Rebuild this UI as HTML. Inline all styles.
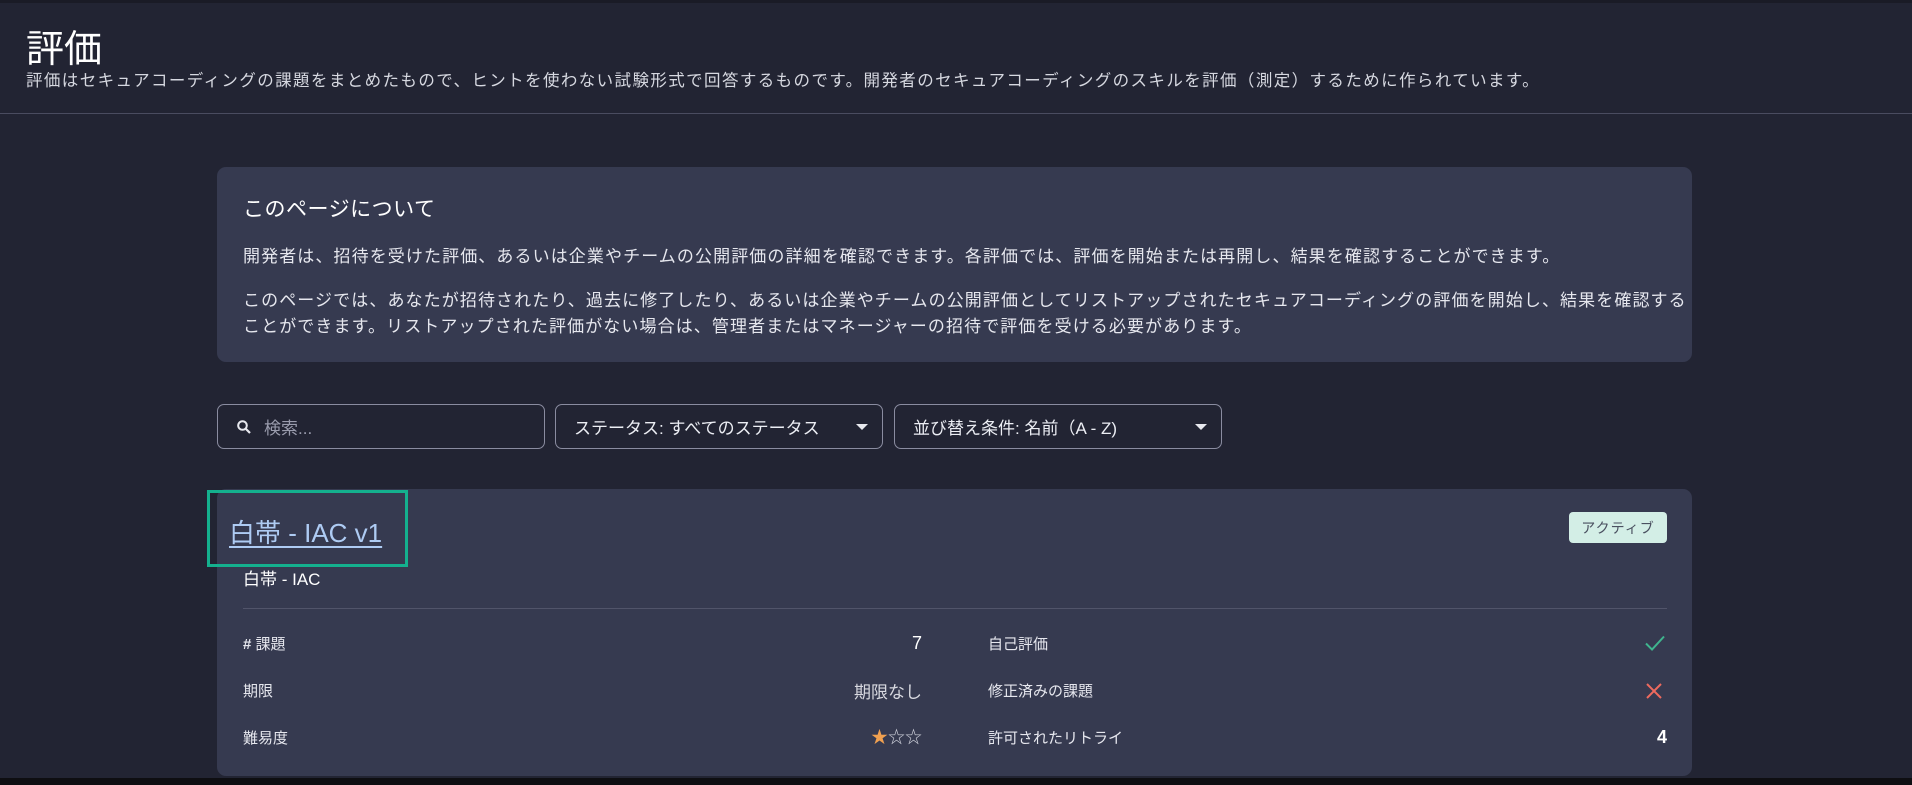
<!DOCTYPE html>
<html><head><meta charset="utf-8"><style>
*{margin:0;padding:0;box-sizing:border-box}
body{width:1912px;height:785px;background:#222433;overflow:hidden;position:relative;font-family:"Liberation Sans","Noto Sans CJK JP",sans-serif;color:#e6e7ee}
.a{position:absolute;white-space:nowrap}
.p{font-size:17px;letter-spacing:1.1px}
.box{position:absolute;background:#363a50;border-radius:9px}
.ctl{position:absolute;top:404px;height:45px;border:1px solid #8a8ca0;border-radius:7px;font-size:17px;color:#eceef4;padding:0 18px;display:flex;align-items:center}
.tri{position:absolute;right:14px;top:19px;width:0;height:0;border-left:6px solid transparent;border-right:6px solid transparent;border-top:6px solid #e8e9ef}
.l{font-size:15px;color:#e6e7ee}
</style></head><body>
<div class="a" style="left:0;top:0;width:1912px;height:3px;background:#1a1b26"></div>
<div class="a" style="left:26px;top:18px;font-size:38px;color:#fff">評価</div>
<div class="a p" style="left:26px;top:67px;font-size:16.5px;letter-spacing:1.4px;color:#d6d8e0">評価はセキュアコーディングの課題をまとめたもので、ヒントを使わない試験形式で回答するものです。開発者のセキュアコーディングのスキルを評価（測定）するために作られています。</div>
<div class="a" style="left:0;top:113px;width:1912px;height:1px;background:#4a4c60"></div>

<div class="box" style="left:217px;top:167px;width:1475px;height:195px"></div>
<div class="a" style="left:243px;top:193px;font-size:21px;color:#fff;letter-spacing:.5px">このページについて</div>
<div class="a p" style="left:243px;top:242px">開発者は、招待を受けた評価、あるいは企業やチームの公開評価の詳細を確認できます。各評価では、評価を開始または再開し、結果を確認することができます。</div>
<div class="a p" style="left:243px;top:286px">このページでは、あなたが招待されたり、過去に修了したり、あるいは企業やチームの公開評価としてリストアップされたセキュアコーディングの評価を開始し、結果を確認する</div>
<div class="a p" style="left:243px;top:312px">ことができます。リストアップされた評価がない場合は、管理者またはマネージャーの招待で評価を受ける必要があります。</div>

<div class="ctl" style="left:217px;width:328px;color:#9a9cad">
<svg width="16" height="16" viewBox="0 0 16 16" style="margin-right:12px"><circle cx="6.5" cy="6.5" r="4.3" fill="none" stroke="#e8e9ef" stroke-width="2"/><path d="M9.6 9.6L14 14" stroke="#e8e9ef" stroke-width="2.2"/></svg>検索...</div>
<div class="ctl" style="left:555px;width:328px">ステータス: すべてのステータス<div class="tri"></div></div>
<div class="ctl" style="left:894px;width:328px">並び替え条件: 名前（A - Z)<div class="tri"></div></div>

<div class="box" style="left:217px;top:489px;width:1475px;height:287px"></div>
<div class="a" style="left:207px;top:490px;width:201px;height:77px;border:3px solid #14b08e"></div>
<div class="a" style="left:229px;top:513px;font-size:26px;color:#aecbf3;text-decoration:underline;text-underline-offset:4px">白帯 - IAC v1</div>
<div class="a" style="left:243px;top:565px;font-size:17px;color:#fff">白帯 - IAC</div>
<div class="a" style="left:1569px;top:512px;width:98px;height:31px;background:#d3eee6;border-radius:4px;color:#4a5060;font-size:14px;display:flex;align-items:center;justify-content:center;letter-spacing:1px">アクティブ</div>
<div class="a" style="left:243px;top:608px;width:1424px;height:1px;background:#51546a"></div>

<div class="a l" style="left:243px;top:633px"><b>#</b> 課題</div>
<div class="a l" style="left:243px;top:680px">期限</div>
<div class="a l" style="left:243px;top:727px">難易度</div>
<div class="a" style="right:990px;top:633px;font-size:18px;color:#fff">7</div>
<div class="a" style="right:990px;top:678px;font-size:17px;color:#d8d9e0">期限なし</div>
<div class="a" style="right:990px;top:723px;font-size:17px"><span style="color:#f0a050">★</span><span style="color:#d0d2dc">☆☆</span></div>

<div class="a l" style="left:988px;top:633px">自己評価</div>
<div class="a l" style="left:988px;top:680px">修正済みの課題</div>
<div class="a l" style="left:988px;top:727px">許可されたリトライ</div>
<svg class="a" style="left:1644px;top:634px" width="22" height="18" viewBox="0 0 22 18"><path d="M2 9.5L8 15.5L20 2.5" fill="none" stroke="#3fb58e" stroke-width="2"/></svg>
<svg class="a" style="left:1645px;top:682px" width="18" height="18" viewBox="0 0 18 18"><path d="M2 2L16 16M16 2L2 16" stroke="#ee6a5e" stroke-width="2"/></svg>
<div class="a" style="right:245px;top:727px;font-size:18px;color:#fff;font-weight:bold">4</div>

<div class="a" style="left:0;top:778px;width:1912px;height:7px;background:#0e0e12"></div>
</body></html>
